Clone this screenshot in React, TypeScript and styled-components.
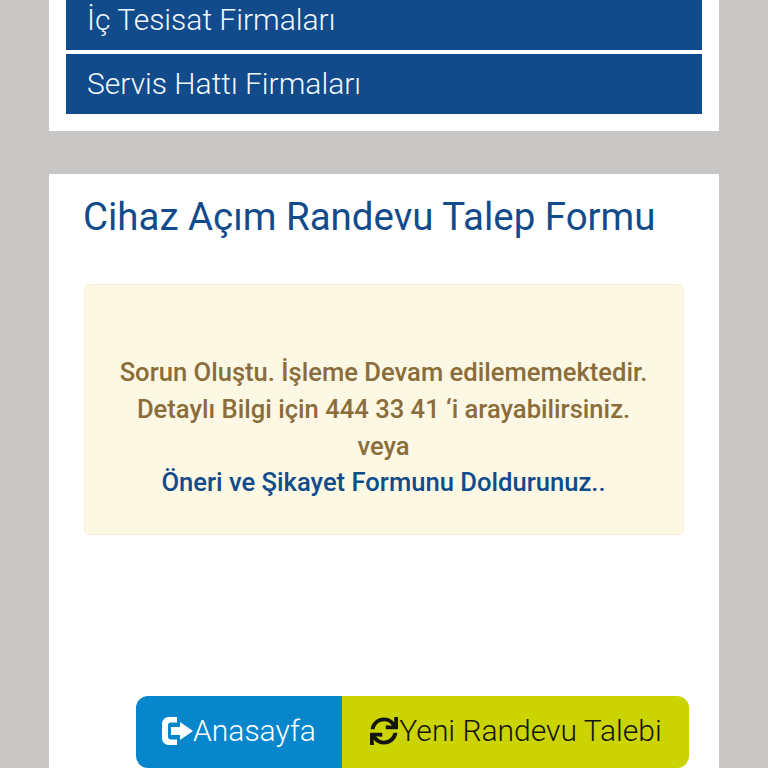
import React from "react";
import styled, { createGlobalStyle } from "styled-components";
import { FaSync } from "react-icons/fa";

const Global = createGlobalStyle`
  html, body { margin: 0; padding: 0; background: #c8c7c5; height: 768px; overflow: hidden; }
  body { font-family: Roboto, "Liberation Sans", sans-serif; }
`;
const Page = styled.div`
  width: 670px;
  height: 778px;
  margin: -10px auto 0 49px;
  display: flex;
  flex-direction: column;
  gap: 43px;
`;
const MenuPanel = styled.nav`
  background: #fff;
  padding: 0 17px 17px;
  display: flex;
  flex-direction: column;
  gap: 4px;
`;
const MenuItem = styled.a`
  height: 60px;
  background: #114b8c;
  color: #f2f7fb;
  font-size: 30px;
  font-weight: 300;
  line-height: 60px;
  padding-left: 21px;
`;
const FormPanel = styled.section`
  flex: 1;
  background: #fff;
  padding: 20px 34px 0;
  display: flex;
  flex-direction: column;
`;
const Title = styled.h2`
  margin: 0;
  height: 90px;
  color: #114b8c;
  font-size: 38.45px;
  font-weight: 400;
  line-height: 46px;
`;
const Alert = styled.div`
  width: 600px;
  height: 251px;
  margin-left: 1px;
  box-sizing: border-box;
  background: #fcf8e3;
  border: 1px solid #f5eeda;
  border-radius: 6px;
  display: flex;
  flex-direction: column;
  align-items: center;
  justify-content: center;
  padding: 36px 1px 0 0;
  color: #8a6d3b;
  font-size: 25.6px;
  font-weight: 500;
  line-height: 36.6px;
  text-align: center;
`;
const AlertLink = styled.a`
  color: #114b8c;
`;
const Actions = styled.div`
  display: flex;
  margin: 161px 0 0 53px;
  height: 72px;
`;
const ActionButton = styled.a<{ $bg: string; $fg: string; $w: number; $radius: string }>`
  flex: none;
  box-sizing: border-box;
  width: ${(p) => p.$w}px;
  padding-bottom: 3px;
  background: ${(p) => p.$bg};
  color: ${(p) => p.$fg};
  border-radius: ${(p) => p.$radius};
  display: flex;
  align-items: center;
  justify-content: center;
  font-size: 30px;
  font-weight: 300;
`;
const SignOut = styled.svg`
  width: 31px;
  height: 28px;
  flex: none;
`;
const Refresh = styled(FaSync)`
  width: 28px;
  height: 28px;
  margin: 0 1px;
  flex: none;
`;

export default function App() {
  return (
    <>
      <Global />
      <Page>
        <MenuPanel>
          <MenuItem>İç Tesisat Firmaları</MenuItem>
          <MenuItem>Servis Hattı Firmaları</MenuItem>
        </MenuPanel>
        <FormPanel>
          <Title>Cihaz Açım Randevu Talep Formu</Title>
          <Alert>
            <div>Sorun Oluştu. İşleme Devam edilememektedir.</div>
            <div>Detaylı Bilgi için 444 33 41 ‘i arayabilirsiniz.</div>
            <div>veya</div>
            <AlertLink>Öneri ve Şikayet Formunu Doldurunuz..</AlertLink>
          </Alert>
          <Actions>
            <ActionButton $bg="#0786cc" $fg="#fff" $w={206} $radius="12px 0 0 12px">
              <SignOut viewBox="0 0 31 28" fill="#fff">
                <path d="M6.500 0H15v5.500H9a3 3 0 0 0-3 3v11a3 3 0 0 0 3 3h6V28H6.500A6.500 6.500 0 0 1 0 21.500v-15A6.500 6.500 0 0 1 6.500 0z" />
                <path d="M18 5l13 9-13 9v-5H9v-8h9z" />
              </SignOut>
              Anasayfa
            </ActionButton>
            <ActionButton $bg="#cbd300" $fg="#141414" $w={347} $radius="0 12px 12px 0">
              <Refresh />
              Yeni Randevu Talebi
            </ActionButton>
          </Actions>
        </FormPanel>
      </Page>
    </>
  );
}
